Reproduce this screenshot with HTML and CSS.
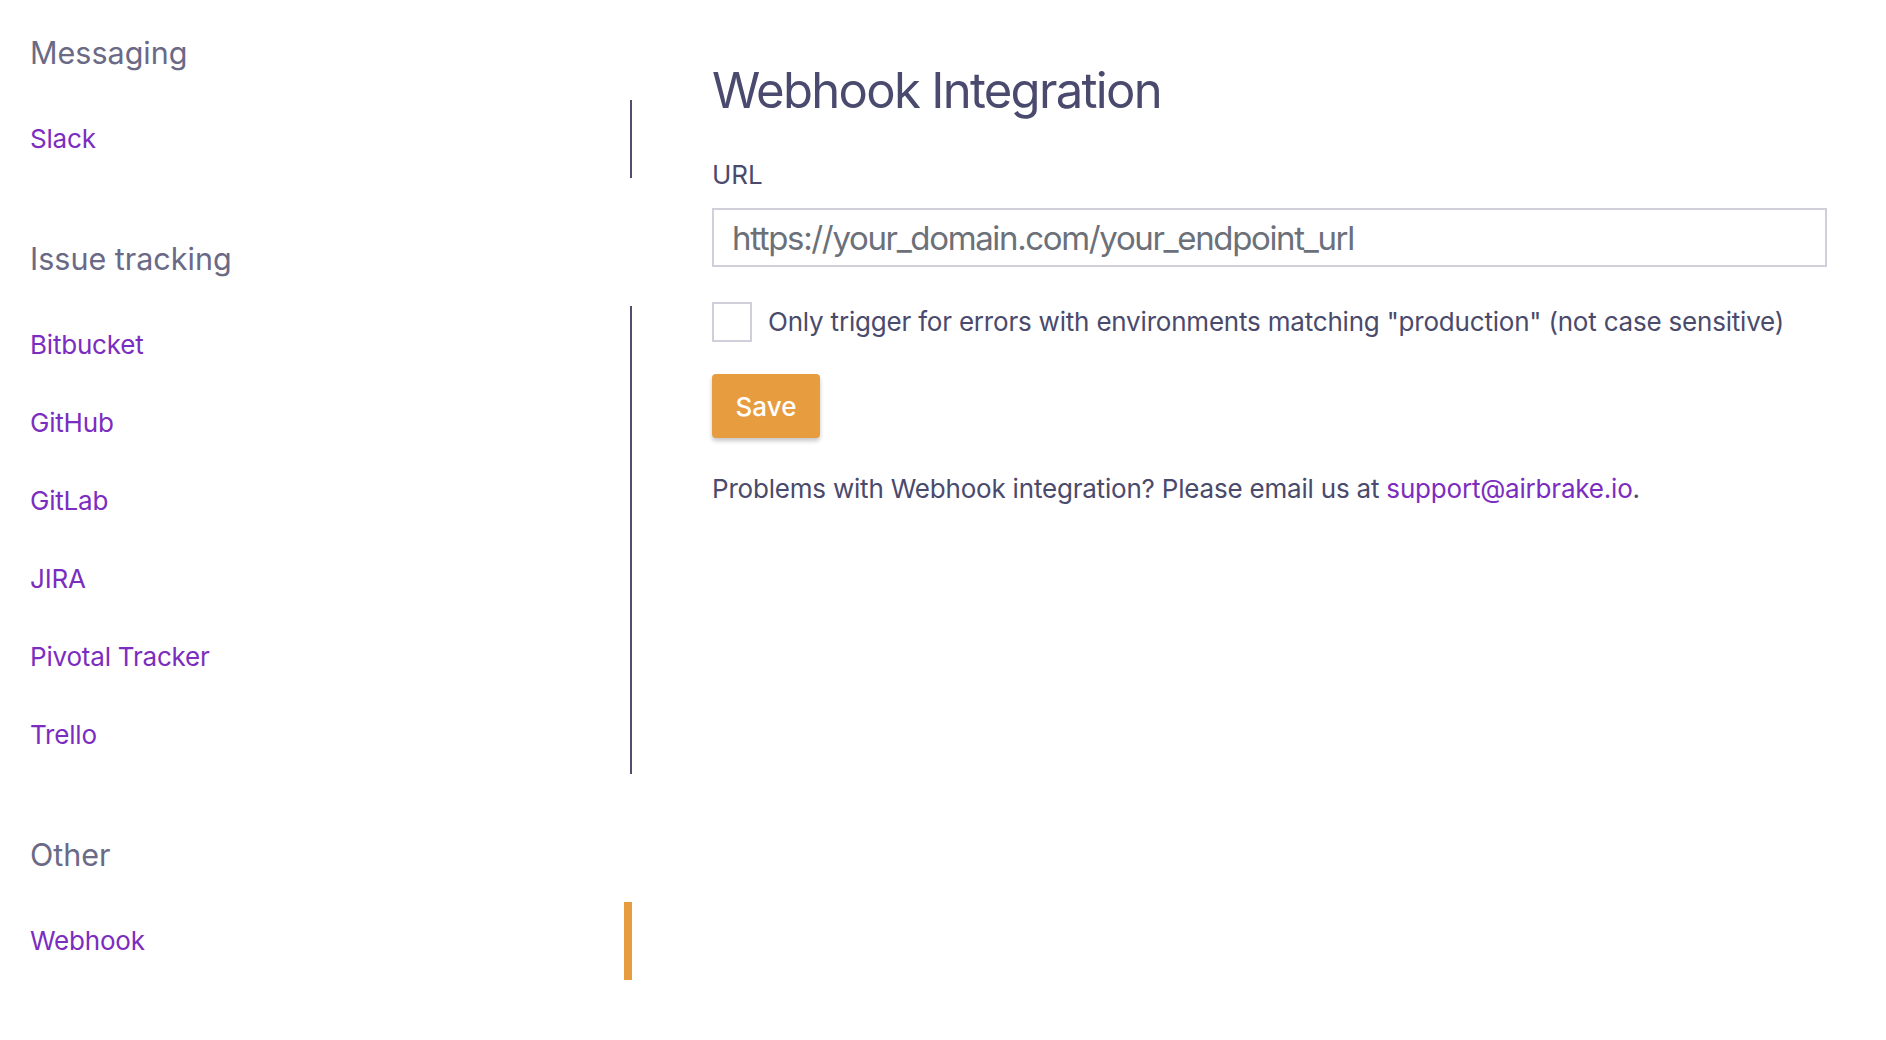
FILE: index.html
```html
<!DOCTYPE html>
<html lang="en">
<head>
<meta charset="utf-8">
<title>Webhook Integration</title>
<link rel="stylesheet" href="styles.css">
</head>
<body>
<div class="layout">
  <nav class="sidebar">
    <section class="nav-section">
      <h2 class="nav-heading">Messaging</h2>
      <ul class="nav-list">
        <li class="nav-item"><a href="#">Slack</a></li>
      </ul>
    </section>
    <section class="nav-section">
      <h2 class="nav-heading">Issue tracking</h2>
      <ul class="nav-list">
        <li class="nav-item"><a href="#">Bitbucket</a></li>
        <li class="nav-item"><a href="#">GitHub</a></li>
        <li class="nav-item"><a href="#">GitLab</a></li>
        <li class="nav-item"><a href="#">JIRA</a></li>
        <li class="nav-item"><a href="#">Pivotal Tracker</a></li>
        <li class="nav-item"><a href="#">Trello</a></li>
      </ul>
    </section>
    <section class="nav-section">
      <h2 class="nav-heading">Other</h2>
      <ul class="nav-list nav-list-plain">
        <li class="nav-item active"><a href="#">Webhook</a></li>
      </ul>
    </section>
  </nav>
  <main class="content">
    <h1 class="title">Webhook Integration</h1>
    <label class="field-label" for="url">URL</label>
    <input class="text-input" id="url" type="text" value="https://your_domain.com/your_endpoint_url">
    <label class="check-row">
      <span class="check-box"></span>
      <span class="check-text">Only trigger for errors with environments matching "production" (not case sensitive)</span>
    </label>
    <div class="actions">
      <button class="btn-save" type="button">Save</button>
    </div>
    <p class="help">Problems with Webhook integration? Please email us at <a href="#">support@airbrake.io</a>.</p>
  </main>
</div>
</body>
</html>
```

FILE: styles.css
```css
* {
  box-sizing: border-box;
}

html, body {
  margin: 0;
  padding: 0;
  background: #ffffff;
}

body {
  font-family: Inter, "Noto Sans", "Liberation Sans", sans-serif;
  color: #4a4a6c;
}

a {
  color: #7b2dbf;
  text-decoration: none;
}

.layout {
  display: flex;
  align-items: flex-start;
}

.sidebar {
  width: 632px;
  flex: 0 0 632px;
  padding: 35px 0 0 30px;
}

.nav-section + .nav-section {
  margin-top: 63px;
}

.nav-heading {
  margin: 0 0 29px;
  font-size: 30.5px;
  line-height: 36px;
  font-weight: 400;
  color: #6a6a86;
}

.nav-list {
  list-style: none;
  margin: 0;
  padding: 0;
  border-right: 2px solid #4f4e70;
}

.nav-list-plain {
  border-right: 0;
}

.nav-item {
  height: 78px;
  font-size: 26px;
  line-height: 78px;
  letter-spacing: -0.2px;
}

.nav-item.active {
  border-right: 8px solid #e89c40;
}

.content {
  flex: 1;
  padding: 61px 59px 0 80px;
  display: flex;
  flex-direction: column;
  align-items: flex-start;
}

.title {
  margin: 0;
  font-size: 49px;
  line-height: 60px;
  font-weight: 400;
  letter-spacing: -1.7px;
  color: #4a4a6e;
}

.field-label {
  margin-top: 38px;
  font-size: 26px;
  line-height: 32px;
  color: #4a4a6c;
}

.text-input {
  margin-top: 17px;
  width: 100%;
  height: 59px;
  border: 2px solid #cfd0d9;
  border-radius: 0;
  padding: 0 18px;
  font-family: inherit;
  font-size: 33px;
  letter-spacing: -1.35px;
  color: #6b7079;
  background: #ffffff;
  outline: none;
}

.check-row {
  margin-top: 35px;
  display: flex;
  align-items: center;
  gap: 16px;
}

.check-box {
  width: 40px;
  height: 40px;
  border: 2px solid #cfd0d9;
  background: #ffffff;
}

.check-text {
  font-size: 26px;
  line-height: 32px;
  letter-spacing: -0.2px;
  color: #4a4a6c;
}

.actions {
  margin-top: 32px;
}

.btn-save {
  width: 108px;
  height: 64px;
  border: 0;
  border-radius: 4px;
  background: #e89c40;
  color: #ffffff;
  font-family: inherit;
  font-size: 26px;
  font-weight: 500;
  box-shadow: 0 3px 4px rgba(0, 0, 0, 0.22);
  cursor: pointer;
}

.help {
  margin: 35px 0 0;
  font-size: 26px;
  line-height: 32px;
  letter-spacing: -0.2px;
  color: #4a4a6c;
}
```
